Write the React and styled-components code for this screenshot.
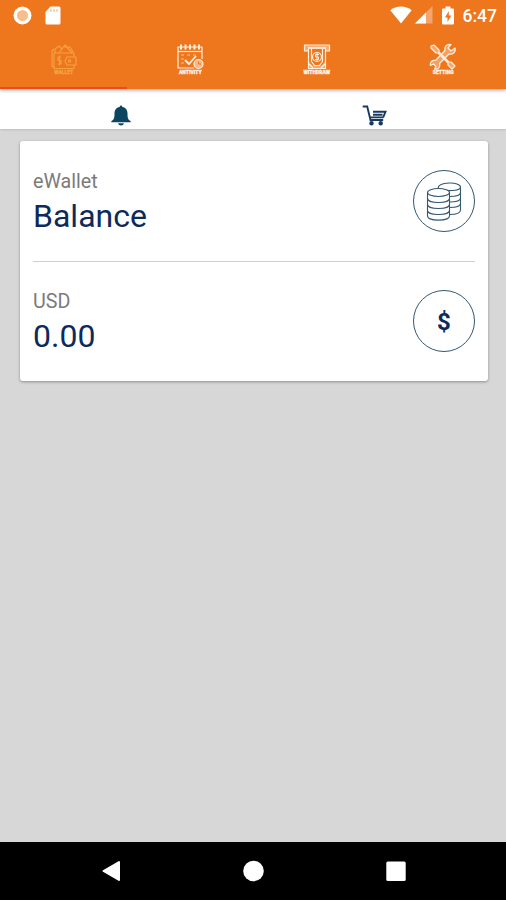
import React, { Component } from 'react'
import styled, { createGlobalStyle } from 'styled-components';


const GlobalStyle = createGlobalStyle`
    * {
        box-sizing: border-box;
    }
    body {
        margin: 0;
        font-family: Roboto, sans-serif;
        background-color: #d7d7d7;
    }
    svg {
        display: block;
    }
    p {
        margin: 0;
    }
`;

const Screen = styled.div`
    height: 900px;
    width: 506px;
    display: flex;
    flex-direction: column;
    overflow: hidden;
    background-color: #d7d7d7;
`;

const Header = styled.header`
    height: 89px;
    flex-shrink: 0;
    background-color: #ee761c;
    box-shadow: 0 1px 4px rgba(0, 0, 0, 0.4);
    z-index: 1;
`;

const StatusBar = styled.div`
    height: 30px;
    display: flex;
    justify-content: space-between;
    padding: 0 9px 0 13px;
`;

const StatusGroup = styled.div`
    display: flex;
    align-items: center;
    gap: ${props => props.$gap}px;
`;

const Time = styled.p`
    font-size: 17.5px;
    font-weight: 500;
    line-height: 20px;
    padding-top: 2px;
    color: white;
`;

const Tabs = styled.nav`
    height: 59px;
    display: flex;
`;

const Tab = styled.div`
    flex: 1;
    display: flex;
    flex-direction: column;
    align-items: center;
    padding-top: 13px;
    padding-left: 1px;
    color: ${props => props.$active ? '#f6a13f' : '#fff0e2'};
    border-bottom: solid 2px ${props => props.$active ? '#ee4a1e' : 'transparent'};
`;

const TabLabel = styled.p`
    font-size: 5px;
    font-weight: 900;
    line-height: 6px;
    margin-top: -1px;
    -webkit-text-stroke: 0.3px currentColor;
`;

const Shortcuts = styled.div`
    height: 40px;
    flex-shrink: 0;
    display: flex;
    background-color: white;
    box-shadow: 0 1px 2px rgba(0, 0, 0, 0.12);
`;

const Shortcut = styled.div`
    flex: 1;
    display: flex;
    justify-content: center;
    padding-top: 16px;
    padding-right: ${props => props.$shift}px;
`;

const Content = styled.main`
    flex: 1;
    padding: 12px 18px 0 20px;
`;

const Card = styled.section`
    height: 240px;
    padding: 0 13px;
    background-color: white;
    border-radius: 3px;
    box-shadow: 0 1px 3px rgba(0, 0, 0, 0.35);
`;

const Row = styled.div`
    height: 120px;
    display: flex;
    justify-content: space-between;
    align-items: center;
    box-shadow: ${props => props.$divided ? '0 1px 0 #cfcfcf' : 'none'};
`;

const Caption = styled.p`
    font-size: 19.7px;
    line-height: 24px;
    margin-top: 3px;
    color: #7b7b7b;
`;

const Amount = styled.p`
    font-size: 32px;
    line-height: 38px;
    margin-top: 3px;
    color: #0d2a5a;
`;

const RoundIcon = styled.div`
    width: 62px;
    height: 62px;
    display: flex;
    justify-content: center;
    align-items: center;
    border: solid 1.3px #34586f;
    border-radius: 50%;
    font-size: 24px;
    line-height: 32px;
    font-weight: 700;
    color: #0d2a5a;
    span {
        padding-top: 2px;
    }
`;

const NavBar = styled.footer`
    height: 58px;
    flex-shrink: 0;
    display: flex;
    justify-content: space-between;
    align-items: center;
    padding: 0 100px 0 101px;
    background-color: black;
`;

const TabSvg = ({ children }) => (
    <svg width="28" height="27" viewBox="0 0 28 27" fill="none" stroke="currentColor" strokeWidth="1.2" strokeLinejoin="round">
        {children}
    </svg>
);

const WalletIcon = () => (
    <TabSvg>
        <path d="M5 10V6l4-3 3 3M9 10l6-8 7 8M13 4h7l3 5" />
        <path d="M4 10h20v4M24 22v3.500H4.500L2 23V8l2-2M4 10v15" />
        <path d="M17 14h9v8h-9l-2-4z" />
        <circle cx="19.5" cy="18" r="1.2" />
        <path d="M11 14H8v3.500h3V21H8M9.500 12.500v10" />
    </TabSvg>
);

const ActivityIcon = () => (
    <TabSvg>
        <path d="M18 25H2V4h24v12" />
        <path d="M2 8.500h24" />
        <path d="M5 1.500v5M9.500 1.500v5M14 1.500v5M18.500 1.500v5M23 1.500v5" strokeWidth="2" />
        <path d="M5 12h3M11 12h3M17 12h3M5 16h3M5 20h3" strokeWidth="1" opacity=".6" />
        <path d="M9 17l4 4 7-8" strokeWidth="1.800" />
        <circle cx="22.500" cy="21" r="4.500" fill="currentColor" fillOpacity=".55" />
        <path d="M22.500 18.500V21h2.500" stroke="#ee761c" strokeWidth="1" />
    </TabSvg>
);

const WithdrawIcon = () => (
    <TabSvg>
        <path d="M1.500 2h25v6h-25z" fill="currentColor" fillOpacity=".45" />
        <path d="M5 5h18" strokeWidth="1.500" />
        <path d="M5.500 6v19.500h17V6" fill="#ee761c" />
        <path d="M5.500 18v7.500h17V18l-4 4.500h-9z" fill="currentColor" fillOpacity=".4" stroke="none" />
        <path d="M8.500 6v12.500l3 4h5l3-4V6" />
        <circle cx="14" cy="14" r="4.500" />
        <path d="M16 11.500h-3.500v2.500h3v2.500H12M14 10v8" strokeWidth="1" />
        <path d="M6 21l4 4M22 21l-4 4" />
    </TabSvg>
);

const SettingIcon = () => (
    <TabSvg>
        <path d="M2 3l3-1 5 5v2l10 10h2l4 4-3 3-4-4v-2L9 10H7L2 5z" fill="currentColor" fillOpacity=".4" />
        <path d="M26 5l-4 3-3-3 3-3.500c-4-1-7 2-6 6L6.500 17.500c-3-1-6 2-5 5l3-1.500 2.500 2.500L5.500 26c4 1 6-2 5-5.500L20 11c4 1 7-2 6-6z" fill="currentColor" fillOpacity=".35" />
    </TabSvg>
);

const RecordIcon = () => (
    <svg width="19" height="19" viewBox="0 0 19 19">
        <circle cx="9.500" cy="9.500" r="9" fill="#fff" />
        <circle cx="9.500" cy="9.500" r="5.500" fill="#f7bd8b" />
    </svg>
);

const SdCardIcon = () => (
    <svg width="16" height="19" viewBox="0 0 16 19">
        <path d="M5.500.5H14q1.500 0 1.500 1.500v15q0 1.500-1.500 1.500H2Q.5 18.500.5 17V6z" fill="#fff" />
        <path d="M6 3v3M9 3v3M12 3v3" stroke="#f7bd8b" strokeWidth="1.200" />
    </svg>
);

const WifiIcon = () => (
    <svg width="22" height="18" viewBox="0 0 22 18">
        <path d="M11 17.500L.3 4.300Q5 .6 11 .6t10.700 3.700z" fill="#fff" />
    </svg>
);

const SignalIcon = () => (
    <svg width="18" height="18" viewBox="0 0 18 18">
        <path d="M0 17.500L17.500 0v17.500z" fill="#fff" opacity=".35" />
        <path d="M0 17.500L11 6.500v11z" fill="#fff" />
    </svg>
);

const BatteryIcon = () => (
    <svg width="12" height="19" viewBox="0 0 12 19">
        <path d="M3.500.5h5v2H11q1 0 1 1v14q0 1-1 1H1q-1 0-1-1v-14q0-1 1-1h2.500z" fill="#fff" />
        <path d="M6.800 5L3 11.500h2.500V16L9.300 9.500H6.800z" fill="#ee761c" />
    </svg>
);

const BellIcon = () => (
    <svg width="20" height="22" viewBox="0 0 20 22" fill="#0b4560">
        <path d="M10 .5q1.300 0 1.300 1.400C15 2.500 16.500 5 16.500 8.500c0 4.500.5 6 3.200 7.700v1H.3v-1C3 14.500 3.500 13 3.500 8.500 3.500 5 5 2.500 8.700 1.900 8.700.5 10 .5 10 .5z" />
        <path d="M7 18.200h6q-.5 2.300-3 2.300t-3-2.300z" />
    </svg>
);

const CartIcon = () => (
    <svg width="25" height="22" viewBox="0 0 25 22" fill="none" stroke="#173a62" strokeWidth="1.900">
        <path d="M.7 1.500h4.500L8.500 15h12.700" />
        <path d="M11 6.700h12.500l-2.200 5.500M11 9.800h9.500M8 12.400h13.500" />
        <circle cx="9.500" cy="18.300" r="1.300" fill="#173a62" />
        <circle cx="18.700" cy="18.300" r="1.300" fill="#173a62" />
    </svg>
);

const CoinsIcon = () => (
    <svg width="36" height="40" viewBox="0 0 36 40" fill="none" stroke="#34586f" strokeWidth="1.100">
        <path d="M12 7.500C12 .5 34.500.5 34.500 6v23c0 3-5 4.500-11 4.500" />
        <path d="M14 7.500c4 3 20.500 3 20.500-1.500M23.500 15.500c5.500 0 11-1 11-4M23.500 21c5.500 0 11-1 11-4M23.500 26.500c5.500 0 11-1 11-4" />
        <ellipse cx="12.500" cy="11.500" rx="11" ry="4" fill="#fff" />
        <path d="M1.500 11.500V35c0 5.500 22 5.500 22 0V11.500" />
        <path d="M1.500 17.500c0 5.300 22 5.300 22 0M1.500 23.500c0 5.300 22 5.300 22 0M1.500 29.500c0 5.300 22 5.300 22 0" />
    </svg>
);

const BackIcon = () => (
    <svg width="20" height="22" viewBox="0 0 20 22">
        <path d="M18 2v18L2.500 11z" fill="#fff" stroke="#fff" strokeWidth="2" strokeLinejoin="round" />
    </svg>
);

const HomeIcon = () => (
    <svg width="22" height="22" viewBox="0 0 22 22">
        <circle cx="10.500" cy="11" r="10.300" fill="#fff" />
    </svg>
);

const RecentIcon = () => (
    <svg width="20" height="20" viewBox="0 0 20 20">
        <rect x=".3" y=".5" width="19.400" height="19.400" rx="1.500" fill="#fff" />
    </svg>
);

class BalanceRow extends Component {
    render() {
        return (
            <Row $divided={this.props.divided}>
                <div>
                    <Caption>{this.props.caption}</Caption>
                    <Amount>{this.props.value}</Amount>
                </div>
                <RoundIcon>{this.props.children}</RoundIcon>
            </Row>
        );
    }
}

class App extends Component {
    render() {
        return (
            <>
                <GlobalStyle/>
                <Screen>
                    <Header>
                        <StatusBar>
                            <StatusGroup $gap={13}>
                                <RecordIcon/>
                                <SdCardIcon/>
                            </StatusGroup>
                            <StatusGroup $gap={9}>
                                <StatusGroup $gap={3}>
                                    <WifiIcon/>
                                    <SignalIcon/>
                                </StatusGroup>
                                <BatteryIcon/>
                                <Time>6:47</Time>
                            </StatusGroup>
                        </StatusBar>
                        <Tabs>
                            <Tab $active>
                                <WalletIcon/>
                                <TabLabel>WALLET</TabLabel>
                            </Tab>
                            <Tab>
                                <ActivityIcon/>
                                <TabLabel>ANTIVITY</TabLabel>
                            </Tab>
                            <Tab>
                                <WithdrawIcon/>
                                <TabLabel>WITHDRAW</TabLabel>
                            </Tab>
                            <Tab>
                                <SettingIcon/>
                                <TabLabel>SETTING</TabLabel>
                            </Tab>
                        </Tabs>
                    </Header>
                    <Shortcuts>
                        <Shortcut $shift={11}>
                            <BellIcon/>
                        </Shortcut>
                        <Shortcut $shift={10}>
                            <CartIcon/>
                        </Shortcut>
                    </Shortcuts>
                    <Content>
                        <Card>
                            <BalanceRow caption="eWallet" value="Balance" divided>
                                <CoinsIcon/>
                            </BalanceRow>
                            <BalanceRow caption="USD" value="0.00">
                                <span>$</span>
                            </BalanceRow>
                        </Card>
                    </Content>
                    <NavBar>
                        <BackIcon/>
                        <HomeIcon/>
                        <RecentIcon/>
                    </NavBar>
                </Screen>
            </>
        )
    }
}

export default App
